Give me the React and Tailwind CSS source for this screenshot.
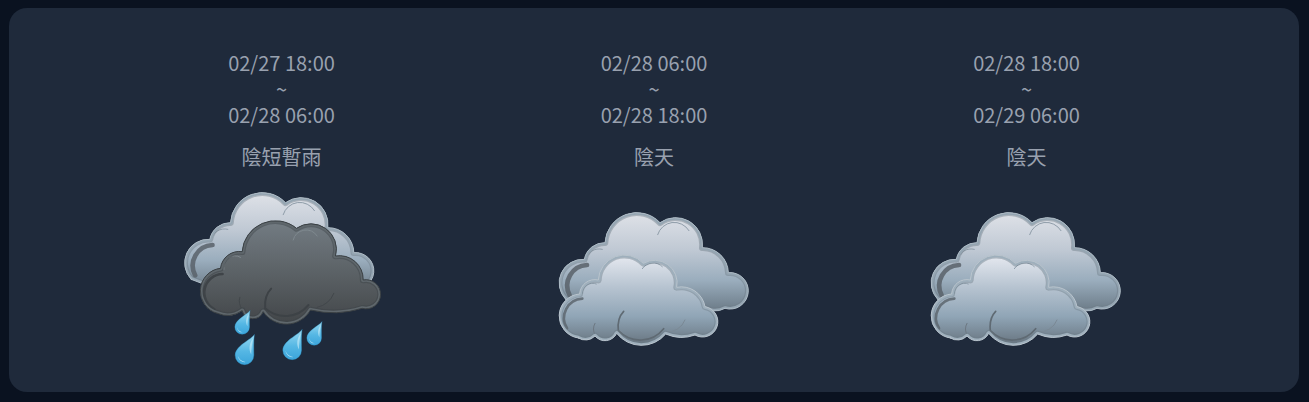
import React from "react";

const forecasts = [
  { from: "02/27 18:00", to: "02/28 06:00", label: "陰短暫雨", rain: true, vx: 4.5 },
  { from: "02/28 06:00", to: "02/28 18:00", label: "陰天", rain: false, vx: -3 },
  { from: "02/28 18:00", to: "02/29 06:00", label: "陰天", rain: false, vx: 0 },
];

// One arc through three points: the start, a point on the curve, the end.
function arc([ax, ay], [bx, by], [cx, cy]) {
  const d = 2 * (ax * (by - cy) + bx * (cy - ay) + cx * (ay - by));
  const a2 = ax * ax + ay * ay;
  const b2 = bx * bx + by * by;
  const c2 = cx * cx + cy * cy;
  const ox = (a2 * (by - cy) + b2 * (cy - ay) + c2 * (ay - by)) / d;
  const oy = (a2 * (cx - bx) + b2 * (ax - cx) + c2 * (bx - ax)) / d;
  const r = Math.hypot(ax - ox, ay - oy);
  const cross = (bx - ax) * (cy - ay) - (by - ay) * (cx - ax);
  const sweep = cross > 0 ? 1 : 0;
  const side = (cx - ax) * (oy - ay) - (cy - ay) * (ox - ax);
  const large = (side > 0) === (sweep === 1) ? 0 : 1;
  return `A${r.toFixed(1)} ${r.toFixed(1)} 0 ${large} ${sweep} ${cx} ${cy}`;
}

function lobes(start, list) {
  let cur = start;
  let out = `M${start[0]} ${start[1]}`;
  for (const [via, end] of list) {
    out += " " + arc(cur, via, end);
    cur = end;
  }
  return out + " Z";
}

const BACK = lobes([62, 298], [
  [[43, 240], [118, 178]],
  [[142, 140], [180, 128]],
  [[255, 40], [345, 68]],
  [[420, 58], [472, 143]],
  [[530, 168], [550, 218]],
  [[610, 270], [540, 325]],
  [[500, 332], [470, 318]],
  [[260, 345], [62, 298]],
]);

const FRONT_LIGHT = lobes([100, 414], [
  [[43, 340], [104, 282]],
  [[125, 246], [160, 240]],
  [[228, 166], [295, 190]],
  [[352, 185], [395, 262]],
  [[445, 270], [480, 320]],
  [[516, 350], [450, 405]],
  [[405, 412], [362, 402]],
  [[290, 436], [215, 400]],
  [[182, 422], [150, 408]],
  [[125, 420], [100, 414]],
]);

const FRONT_DARK = lobes([140, 400], [
  [[90, 325], [150, 265]],
  [[172, 226], [215, 215]],
  [[296, 124], [378, 145]],
  [[465, 145], [495, 228]],
  [[548, 240], [578, 300]],
  [[630, 345], [575, 385]],
  [[500, 398], [420, 390]],
  [[340, 432], [278, 395]],
  [[245, 416], [215, 392]],
  [[175, 406], [140, 400]],
]);

const DROP = "M1.05 -2.2 C0.6 -1.6 -1 -1 -1 0 A1 1 0 0 0 1 0 C1 -0.7 0.95 -1.4 1.05 -2.2 Z";

function Drop({ x, y, r }) {
  return (
    <g transform={`translate(${x} ${y}) scale(${r})`}>
      <path d={DROP} fill="url(#dropfill)" stroke="#2f9ad2" strokeWidth="0.04" />
      <path d="M-0.72 0.05 A0.72 0.72 0 0 0 0.1 0.72 A1 1 0 0 1 -0.72 0.05 Z" fill="#c9eefb" opacity="0.85" />
      <path d="M0.72 -0.1 C0.74 -0.7 0.8 -1.2 0.92 -1.8 C0.5 -1.3 0.42 -0.6 0.72 -0.1 Z" fill="#d6f3fc" opacity="0.55" />
    </g>
  );
}

function Cloud({ d, id, fill, outer, rim, line, children }) {
  return (
    <>
      <clipPath id={`clip-${id}`}>
        <path d={d} />
      </clipPath>
      <path d={d} fill={fill} />
      <g clipPath={`url(#clip-${id})`} fill="none" strokeLinejoin="round" strokeLinecap="round">
        {children}
        <path d={d} stroke={line} strokeWidth="20" opacity="0.45" />
        <path d={d} stroke={rim} strokeWidth="13" />
      </g>
      <path d={d} fill="none" stroke={outer} strokeWidth="3" strokeLinejoin="round" />
    </>
  );
}

function WeatherIcon({ rain, vx, idx }) {
  const y = rain ? 0 : 60;
  return (
    <svg width="220" height="190" viewBox={`${vx} 0 660 570`} className="block blur-[0.4px]">
      <defs>
        <linearGradient id={`back${idx}`} x1="0" y1="0" x2="0" y2="1">
          <stop offset="0" stopColor="#dfe2e8" />
          <stop offset="0.36" stopColor="#c0c9d4" />
          <stop offset="0.66" stopColor="#9aadbd" />
          <stop offset="1" stopColor="#64737f" />
        </linearGradient>
        <linearGradient id={`front${idx}`} x1="0" y1="0" x2="0" y2="1">
          <stop offset="0" stopColor="#e6e9f0" />
          <stop offset="0.36" stopColor="#b6c3d0" />
          <stop offset="0.68" stopColor="#90a5b6" />
          <stop offset="1" stopColor="#66737e" />
        </linearGradient>
        <linearGradient id={`dark${idx}`} x1="0" y1="0" x2="0" y2="1">
          <stop offset="0" stopColor="#737c83" />
          <stop offset="0.55" stopColor="#595f63" />
          <stop offset="1" stopColor="#424649" />
        </linearGradient>
        <linearGradient id="dropfill" x1="0" y1="0" x2="0" y2="1">
          <stop offset="0" stopColor="#9adaf2" />
          <stop offset="0.55" stopColor="#55b7e4" />
          <stop offset="1" stopColor="#3ba4da" />
        </linearGradient>
      </defs>
      <g transform={`translate(0 ${y})`} fill="none" strokeLinecap="round">
        <Cloud d={BACK} id={`b${idx}`} fill={`url(#back${idx})`} outer="#aebbc5" rim="#94a5b2" line="#6f7d87">
          <path d="M74 286 A62 62 0 0 1 126 195" stroke="#59626a" strokeWidth="14" opacity="0.85" />
          <path d="M338 104 A52 52 0 0 1 432 92" stroke="#8e9ca8" strokeWidth="3" />
          <path d="M122 180 A40 40 0 0 1 172 148" stroke="#8e9ca8" strokeWidth="3" />
        </Cloud>
        {rain ? (
          <>
            <Cloud d={FRONT_DARK} id={`f${idx}`} fill={`url(#dark${idx})`} outer="#3a4044" rim="#5f676c" line="#3c4246">
              <path d="M368 180 A40 40 0 0 1 440 168" stroke="#7f898f" strokeWidth="3" />
              <path d="M160 268 A34 34 0 0 1 210 232" stroke="#80898f" strokeWidth="3" />
              <path d="M132 388 A56 56 0 0 1 156 282" stroke="#3f4448" strokeWidth="8" />
              <path d="M284 385 A90 90 0 0 0 414 375 M284 385 A42 62 0 0 1 302 326" stroke="#3d4246" strokeWidth="6" />
              <path d="M215 388 A40 40 0 0 1 208 352" stroke="#42474b" strokeWidth="3" />
              <path d="M440 382 A70 70 0 0 0 490 340" stroke="#42474b" strokeWidth="3" />
            </Cloud>
            <Drop x={215} y={441} r={22} />
            <Drop x={222} y={526} r={28} />
            <Drop x={365} y={511} r={28} />
            <Drop x={431} y={474} r={22} />
          </>
        ) : (
          <Cloud d={FRONT_LIGHT} id={`f${idx}`} fill={`url(#front${idx})`} outer="#b9c4cd" rim="#9eafbc" line="#6f7e8a">
            <path d="M66 385 A58 58 0 0 1 112 296" stroke="#5d666e" strokeWidth="8" opacity="0.85" />
            <path d="M292 206 A38 38 0 0 1 352 200" stroke="#8f9fac" strokeWidth="3" />
            <path d="M112 280 A30 30 0 0 1 154 252" stroke="#8f9fac" strokeWidth="3" />
            <path d="M220 392 A90 90 0 0 0 356 386 M220 392 A38 58 0 0 1 236 334" stroke="#5f6a73" strokeWidth="5" />
            <path d="M150 404 A34 34 0 0 1 150 370" stroke="#6d7882" strokeWidth="3" />
            <path d="M362 396 A56 56 0 0 0 420 360" stroke="#7b8995" strokeWidth="3" />
          </Cloud>
        )}
      </g>
    </svg>
  );
}

export default function App() {
  return (
    <div className="min-h-screen bg-[#0a1220] pt-2 pl-[9px] pr-[10px] pb-[10px] font-['Noto_Sans_CJK_TC','Noto_Sans',sans-serif]">
      <div className="flex h-[384px] justify-center rounded-[18px] bg-[#1f2a3b] pt-[42px]">
        <div className="grid w-[1117.5px] grid-cols-3">
          {forecasts.map((f, i) => (
            <div key={i} className="flex flex-col items-center text-center text-xl text-gray-400">
              <div className="leading-[26px]">
                <div>{f.from}</div>
                <div>~</div>
                <div>{f.to}</div>
              </div>
              <div className="mt-[15px] leading-7">{f.label}</div>
              <div className="mt-[9px]">
                <WeatherIcon rain={f.rain} vx={f.vx} idx={i} />
              </div>
            </div>
          ))}
        </div>
      </div>
    </div>
  );
}
